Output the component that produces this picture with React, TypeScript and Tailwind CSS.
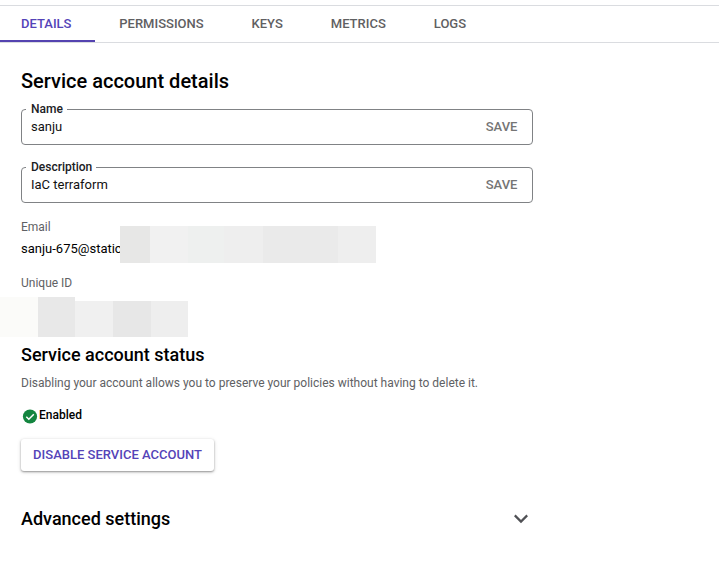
import React from "react";

const tabs = [
  { label: "DETAILS", box: "ml-[21px] w-[98.3px]" },
  { label: "PERMISSIONS", box: "w-[132.2px]" },
  { label: "KEYS", box: "w-[79.3px]" },
  { label: "METRICS", box: "w-[103px]" },
  { label: "LOGS", box: "w-[60px]" },
];

function Field({ label, value, notch }: { label: string; value: string; notch: string }) {
  return (
    <div className="relative flex h-9 w-[512px] items-center justify-between rounded border border-[#808285] pr-[14.6px] pl-[9px]">
      <span className={`absolute -top-[9px] left-[4px] h-4 bg-white pl-[5px] text-[12px] leading-4 font-medium whitespace-nowrap text-[#202124] ${notch}`}>{label}</span>
      <span className="text-[13px] leading-5 text-[#111111]">{value}</span>
      <span className="text-[13px] leading-5 font-medium text-[#757575]">SAVE</span>
    </div>
  );
}

export default function App() {
  return (
    <main className="h-[567px] w-[719px] overflow-hidden bg-white font-[Roboto,sans-serif] text-black">
      <nav className="mt-[5px] flex h-[38px] border-y border-[#dadce0]">
        {tabs.map((tab, i) => (
          <div key={tab.label} className={`relative shrink-0 text-[13px] leading-[36px] font-medium ${tab.box} ${i === 0 ? "text-[#5443b8]" : "text-[#5f6062]"}`}>
            {tab.label}
            {i === 0 && <span className="absolute bottom-0 -left-[21px] h-[2px] w-[95px] bg-[#5443b0]" />}
          </div>
        ))}
      </nav>
      <div className="pl-[21px]">
        <h1 className="pt-[24px] text-[20px] leading-7 font-medium">Service account details</h1>
        <div className="mt-[14px] flex flex-col gap-[22px]">
          <Field label="Name" value="sanju" notch="w-[41px]" />
          <Field label="Description" value="IaC terraform" notch="w-[70px]" />
        </div>
        <p className="mt-[16px] text-[12px] leading-4 text-[#606164]">Email</p>
        <div className="mt-[-9px] flex h-[37px]">
          <span className="w-[99px] pt-[13px] text-[13px] leading-5 whitespace-nowrap">sanju-675@static</span>
          <span className="relative flex">
            <span className="w-[30px] bg-[#e7e7e6]" />
            <span className="w-[38px] bg-[#f1f1f1]" />
            <span className="w-[36px] bg-[#eef0ef]" />
            <span className="w-[39px] bg-[#eeeeee]" />
            <span className="w-[75px] bg-[#eaeaea]" />
            <span className="w-[38px] bg-[#eeeeee]" />
          </span>
        </div>
        <p className="mt-[12px] text-[12px] leading-4 text-[#606164]">Unique ID</p>
        <div className="mt-[6px] -ml-[21px] flex h-10">
          <span className="w-[38px] bg-[#fbfbf9]" />
          <span className="w-[37px] bg-[#e8e8e8]" />
          <span className="mt-1 w-[38px] bg-[#f0f0f0]" />
          <span className="mt-1 w-[38px] bg-[#e7e7e7]" />
          <span className="mt-1 w-[37px] bg-[#eeeeee]" />
        </div>
        <h2 className="mt-[4px] text-[18px] leading-7 font-medium">Service account status</h2>
        <p className="mt-[6px] text-[12px] leading-4 text-[#606164]">Disabling your account allows you to preserve your policies without having to delete it.</p>
        <div className="mt-[16px] flex h-4 items-center text-[12px] leading-4 font-medium">
          <svg className="mt-[2px] mr-px size-[17px] shrink-0" viewBox="0 0 17 17">
            <circle cx="9" cy="8.5" r="7.1" fill="#13853f" />
            <path d="m5.3 8.7 2.5 2.5 5-5" fill="none" stroke="white" strokeWidth="1.5" />
          </svg>
          Enabled
        </div>
        <button className="mt-[16px] flex h-8 w-[193px] items-center justify-center rounded-[3px] bg-white text-[13px] font-medium text-[#5443b8] shadow-[0_1px_2px_rgba(0,0,0,0.35),0_1px_4px_rgba(0,0,0,0.15)]">DISABLE SERVICE ACCOUNT</button>
        <div className="mt-[34px] flex h-7 w-[508px] items-center justify-between">
          <h2 className="text-[18px] leading-7 font-medium">Advanced settings</h2>
          <svg className="mb-px h-[10px] w-4" viewBox="0 0 16 10" fill="none" stroke="#505155" strokeWidth="2.2"><path d="m1.8 1.4 6.2 6.2 6.2-6.2" /></svg>
        </div>
      </div>
    </main>
  );
}
